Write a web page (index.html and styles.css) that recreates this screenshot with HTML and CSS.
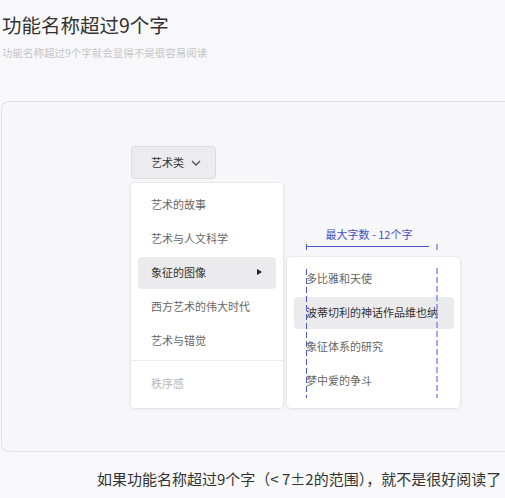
FILE: index.html
```html
<!DOCTYPE html>
<html lang="zh-CN">
<head>
<meta charset="utf-8">
<title>功能名称超过9个字</title>
<link rel="stylesheet" href="styles.css">
</head>
<body>
<div class="page">
  <header class="head">
    <h1 class="title">功能名称超过9个字</h1>
    <p class="subtitle">功能名称超过9个字就会显得不是很容易阅读</p>
  </header>
  <section class="panel">
    <div class="dropdown">
      <button class="trigger">艺术类<svg class="chevron" width="10" height="6" viewBox="0 0 10 6"><path d="M1 1 L5 5 L9 1" fill="none" stroke="#555" stroke-width="1.3"/></svg></button>
      <div class="menus">
        <ul class="menu menu-main">
          <li class="item">艺术的故事</li>
          <li class="item">艺术与人文科学</li>
          <li class="item active">象征的图像<span class="caret"></span></li>
          <li class="item">西方艺术的伟大时代</li>
          <li class="item">艺术与错觉</li>
          <li class="divider"></li>
          <li class="item muted">秩序感</li>
        </ul>
        <div class="sub-wrap">
          <ul class="menu menu-sub">
            <li class="item">多比雅和天使</li>
            <li class="item active">波蒂切利的神话作品维也纳</li>
            <li class="item">象征体系的研究</li>
            <li class="item">梦中爱的争斗</li>
          </ul>
          <div class="measure">
            <svg class="measure-lines" width="137" height="180" viewBox="0 0 137 180">
              <line x1="3" y1="25.5" x2="126" y2="25.5" stroke="#4a58cc" stroke-width="1"/>
              <line x1="3.5" y1="23" x2="3.5" y2="29" stroke="#4a58cc" stroke-width="1"/>
              <line x1="134" y1="23" x2="134" y2="29" stroke="#8c8ce2" stroke-width="1.5"/>
              <line x1="3.5" y1="48" x2="3.5" y2="177" stroke="#4a58cc" stroke-width="1" stroke-dasharray="6 3"/>
              <line x1="134" y1="47" x2="134" y2="177" stroke="#8c8ce2" stroke-width="1.5" stroke-dasharray="6 3"/>
            </svg>
            <div class="measure-label">最大字数 - 12个字</div>
          </div>
        </div>
      </div>
    </div>
  </section>
  <p class="caption">如果功能名称超过9个字（&lt; 7±2的范围），就不是很好阅读了</p>
</div>
</body>
</html>
```

FILE: styles.css
```css
html, body {
  margin: 0;
  padding: 0;
  overflow: hidden;
  background: #f8f8fa;
}

body {
  font-family: "Noto Sans CJK SC", "Noto Sans", sans-serif;
  color: #333;
}

.page {
  width: 505px;
  height: 498px;
}

.head {
  padding-left: 2px;
}

.title {
  margin: 11px 0 0;
  font-size: 19.5px;
  line-height: 28px;
  font-weight: 400;
  color: #333;
}

.subtitle {
  margin: 7px 0 0;
  font-size: 10.5px;
  line-height: 14px;
  color: #c4c4c8;
}

.panel {
  box-sizing: border-box;
  margin: 41px 0 0 1px;
  width: 504px;
  height: 351px;
  border: 1px solid #e2e2e6;
  border-right: none;
  border-radius: 8px 0 0 8px;
  background: #f7f7f9;
  padding: 44px 0 0 129px;
}

.dropdown {
  display: flex;
  flex-direction: column;
  align-items: flex-start;
  gap: 4px;
}

.trigger {
  box-sizing: border-box;
  width: 85px;
  height: 33px;
  display: flex;
  align-items: center;
  gap: 7px;
  padding: 0 0 2px 19px;
  border: 1px solid #dcdce0;
  border-radius: 4px;
  background: #ececef;
  font-family: inherit;
  font-size: 11px;
  color: #333;
}

.chevron {
  display: block;
  margin-top: 2px;
}

.menus {
  display: flex;
  align-items: flex-start;
  gap: 4px;
}

.menu {
  list-style: none;
  margin: 0;
  background: #fff;
  border-radius: 4px;
  box-shadow: 0 0 0 1px rgba(0, 0, 0, 0.03), 0 1px 5px rgba(0, 0, 0, 0.07);
  display: flex;
  flex-direction: column;
  gap: 2px;
}

.menu-main {
  box-sizing: border-box;
  width: 152px;
  height: 225px;
  padding: 6px 7px 0;
}

.menu-sub {
  box-sizing: border-box;
  width: 173px;
  height: 151px;
  padding: 6px 6px 0 7px;
  margin-top: 74px;
}

.sub-wrap {
  position: relative;
}

.item {
  position: relative;
  box-sizing: border-box;
  height: 32px;
  display: flex;
  align-items: center;
  padding: 0 0 3px 13px;
  border-radius: 4px;
  font-size: 11px;
  color: #666;
  white-space: nowrap;
}

.menu-sub .item {
  padding-left: 12px;
}

.item.active {
  background: #ebebed;
  color: #333;
}

.item.muted {
  color: #b8b8bc;
  margin-top: 5px;
}

.caret {
  position: absolute;
  right: 14px;
  top: 12px;
  width: 0;
  height: 0;
  border-top: 3px solid transparent;
  border-bottom: 3px solid transparent;
  border-left: 5px solid #222;
}

.divider {
  height: 1px;
  background: #ececee;
  margin: 1px -7px 0;
}

.measure {
  position: absolute;
  left: 16px;
  top: 38px;
  width: 137px;
  height: 180px;
  pointer-events: none;
}

.measure-lines {
  position: absolute;
  left: 0;
  top: 0;
}

.measure-label {
  position: relative;
  padding: 5px 5px 0 0;
  line-height: 16px;
  text-align: center;
  font-size: 11px;
  color: #3f4fc6;
  white-space: nowrap;
}

.caption {
  margin: 16px 0 0;
  padding-left: 97px;
  font-size: 15px;
  line-height: 22px;
  color: #333;
  white-space: nowrap;
}
```
